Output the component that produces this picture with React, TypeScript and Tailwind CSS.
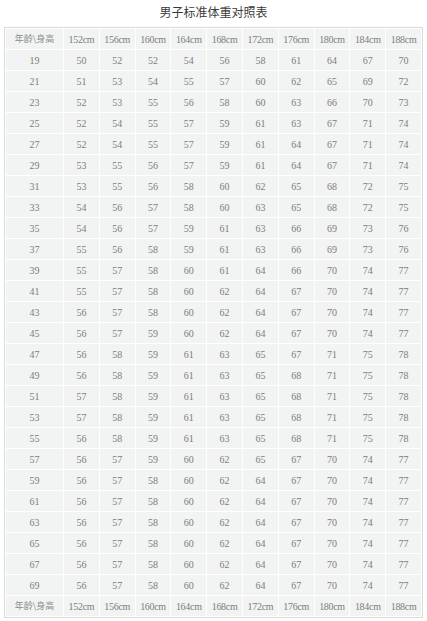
import React from "react";

const heights = ["152cm", "156cm", "160cm", "164cm", "168cm", "172cm", "176cm", "180cm", "184cm", "188cm"];

const rows: [string, number[]][] = [
  ["19", [50, 52, 52, 54, 56, 58, 61, 64, 67, 70]],
  ["21", [51, 53, 54, 55, 57, 60, 62, 65, 69, 72]],
  ["23", [52, 53, 55, 56, 58, 60, 63, 66, 70, 73]],
  ["25", [52, 54, 55, 57, 59, 61, 63, 67, 71, 74]],
  ["27", [52, 54, 55, 57, 59, 61, 64, 67, 71, 74]],
  ["29", [53, 55, 56, 57, 59, 61, 64, 67, 71, 74]],
  ["31", [53, 55, 56, 58, 60, 62, 65, 68, 72, 75]],
  ["33", [54, 56, 57, 58, 60, 63, 65, 68, 72, 75]],
  ["35", [54, 56, 57, 59, 61, 63, 66, 69, 73, 76]],
  ["37", [55, 56, 58, 59, 61, 63, 66, 69, 73, 76]],
  ["39", [55, 57, 58, 60, 61, 64, 66, 70, 74, 77]],
  ["41", [55, 57, 58, 60, 62, 64, 67, 70, 74, 77]],
  ["43", [56, 57, 58, 60, 62, 64, 67, 70, 74, 77]],
  ["45", [56, 57, 59, 60, 62, 64, 67, 70, 74, 77]],
  ["47", [56, 58, 59, 61, 63, 65, 67, 71, 75, 78]],
  ["49", [56, 58, 59, 61, 63, 65, 68, 71, 75, 78]],
  ["51", [57, 58, 59, 61, 63, 65, 68, 71, 75, 78]],
  ["53", [57, 58, 59, 61, 63, 65, 68, 71, 75, 78]],
  ["55", [56, 58, 59, 61, 63, 65, 68, 71, 75, 78]],
  ["57", [56, 57, 59, 60, 62, 65, 67, 70, 74, 77]],
  ["59", [56, 57, 58, 60, 62, 64, 67, 70, 74, 77]],
  ["61", [56, 57, 58, 60, 62, 64, 67, 70, 74, 77]],
  ["63", [56, 57, 58, 60, 62, 64, 67, 70, 74, 77]],
  ["65", [56, 57, 58, 60, 62, 64, 67, 70, 74, 77]],
  ["67", [56, 57, 58, 60, 62, 64, 67, 70, 74, 77]],
  ["69", [56, 57, 58, 60, 62, 64, 67, 70, 74, 77]],
];

function HeaderRow() {
  return (
    <>
      <div className="h-[20px] bg-[#f1f4f2] flex items-center justify-center text-[9px] text-[#8c8c8c] [font-family:'Noto_Sans_CJK_SC',sans-serif]">
        年龄\身高
      </div>
      {heights.map((h) => (
        <div key={h} className="h-[20px] bg-[#f1f4f2] flex items-center justify-center text-[10px] tracking-[-0.3px] text-[#7d7d7d]">
          {h}
        </div>
      ))}
    </>
  );
}

export default function App() {
  return (
    <div className="w-[427px] h-[621px] bg-white overflow-hidden [font-family:'Liberation_Serif',serif]">
      <div className="h-[27px] pt-[4px] text-center text-[12px] text-[#3a3a3a] [font-family:'Noto_Sans_CJK_SC',sans-serif] leading-[16px]">
        男子标准体重对照表
      </div>
      <div className="ml-[4px] w-[419px] border border-[#d9dbda] bg-white p-px">
        <div className="grid grid-cols-[57px_repeat(10,minmax(0,1fr))] gap-px">
          <HeaderRow />
          {rows.map(([age, vals]) => (
            <React.Fragment key={age}>
              <div className="h-[20px] bg-[#f1f4f2] flex items-center justify-center text-[10px] text-[#7d7d7d]">
                {age}
              </div>
              {vals.map((v, i) => (
                <div key={i} className="h-[20px] bg-[#f1f4f2] flex items-center justify-center text-[10px] text-[#7d7d7d]">
                  {v}
                </div>
              ))}
            </React.Fragment>
          ))}
          <HeaderRow />
        </div>
      </div>
    </div>
  );
}
